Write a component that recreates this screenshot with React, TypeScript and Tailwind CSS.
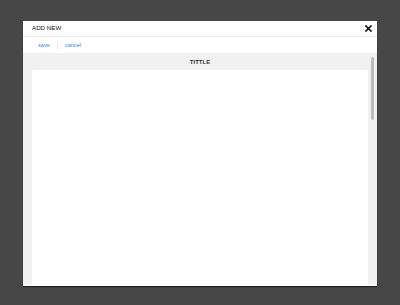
export default function App() {
  return (
    <div className="w-[400px] h-[305px] bg-[#474747] pt-[21px] pl-[23px] font-['Liberation_Sans',Arial,sans-serif]">
      <div className="w-[354px] h-[265px] bg-white flex flex-col pb-[1px] shadow-[0_1px_1px_rgba(0,0,0,0.6)]">
        {/* header */}
        <div className="h-[16px] flex items-center justify-between pl-[9px] pr-[5px] border-b border-[#ececec]">
          <span className="text-[6.2px] leading-none text-[#111]">ADD NEW</span>
          <svg width="7" height="7" viewBox="0 0 7 7" className="w-[7px] h-[7px] text-[#111]">
            <path d="M1 1L6 6M6 1L1 6" stroke="currentColor" strokeWidth="1.6" strokeLinecap="square" />
          </svg>
        </div>

        {/* toolbar */}
        <div className="h-[16px] flex items-center pl-[15px] pt-[1px] text-[5.6px] leading-none text-[#3a8ae8]">
          <span>save</span>
          <span className="mx-[7px] w-px h-[6px] bg-[#e4e4e4]" />
          <span>cancel</span>
        </div>

        {/* content */}
        <div className="flex-1 flex bg-[#f1f1f1] overflow-hidden">
          <div className="flex-1 flex flex-col pl-[9px]">
            <div className="h-[17px] flex items-center justify-center text-[6px] font-bold leading-none text-[#333]">
              TITTLE
            </div>
            <div className="flex-1 bg-white rounded-t-[2px]" />
          </div>
          <div className="w-[9px] pt-[4px] pl-[3px]">
            <div className="w-[3px] h-[63px] rounded-full bg-[#bdbdbd]" />
          </div>
        </div>
      </div>
    </div>
  );
}
